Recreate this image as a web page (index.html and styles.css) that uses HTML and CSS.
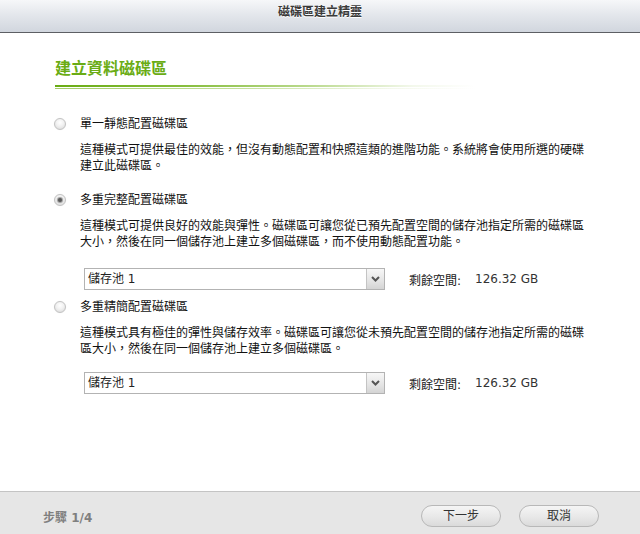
FILE: index.html
```html
<!DOCTYPE html>
<html lang="zh-Hant">
<head>
<meta charset="utf-8">
<title>磁碟區建立精靈</title>
<link rel="stylesheet" href="styles.css">
</head>
<body>
<div class="window">
  <div class="titlebar">磁碟區建立精靈</div>
  <div class="main">
    <h1 class="heading">建立資料磁碟區</h1>
    <div class="rule"><div class="rule-top"></div><div class="rule-bottom"></div></div>

    <div class="options">
      <div class="option opt1">
        <div class="option-head"><span class="radio"></span><span>單一靜態配置磁碟區</span></div>
        <p class="desc">這種模式可提供最佳的效能，但沒有動態配置和快照這類的進階功能。系統將會使用所選的硬碟建立此磁碟區。</p>
      </div>

      <div class="option opt2">
        <div class="option-head"><span class="radio checked"></span><span>多重完整配置磁碟區</span></div>
        <p class="desc">這種模式可提供良好的效能與彈性。磁碟區可讓您從已預先配置空間的儲存池指定所需的磁碟區大小，然後在同一個儲存池上建立多個磁碟區，而不使用動態配置功能。</p>
        <div class="pool-row row1">
          <div class="select"><span class="select-text">儲存池 1</span><span class="select-btn"><svg width="9" height="6" viewBox="0 0 9 6"><path d="M1 1 L4.5 4.5 L8 1" fill="none" stroke="#555" stroke-width="2"/></svg></span></div>
          <span class="free-label">剩餘空間:</span><span class="free-value">126.32 GB</span>
        </div>
      </div>

      <div class="option opt3">
        <div class="option-head"><span class="radio"></span><span>多重精簡配置磁碟區</span></div>
        <p class="desc">這種模式具有極佳的彈性與儲存效率。磁碟區可讓您從未預先配置空間的儲存池指定所需的磁碟區大小，然後在同一個儲存池上建立多個磁碟區。</p>
        <div class="pool-row row2">
          <div class="select"><span class="select-text">儲存池 1</span><span class="select-btn"><svg width="9" height="6" viewBox="0 0 9 6"><path d="M1 1 L4.5 4.5 L8 1" fill="none" stroke="#555" stroke-width="2"/></svg></span></div>
          <span class="free-label">剩餘空間:</span><span class="free-value">126.32 GB</span>
        </div>
      </div>
    </div>
  </div>
  <div class="footer">
    <span class="step">步驟 1/4</span>
    <div class="buttons">
      <button class="btn">下一步</button>
      <button class="btn">取消</button>
    </div>
  </div>
</div>
</body>
</html>
```
FILE: styles.css
```css
html, body {
  margin: 0;
  padding: 0;
  background: #fff;
}
body {
  font-family: "DejaVu Sans", "Noto Sans CJK TC", sans-serif;
  font-size: 12px;
  color: #111;
}
.window {
  width: 640px;
  height: 534px;
  display: flex;
  flex-direction: column;
  overflow: hidden;
}
.titlebar {
  height: 33px;
  box-sizing: border-box;
  padding-top: 5px;
  line-height: 14px;
  text-align: center;
  font-weight: bold;
  color: #3a3a3a;
  text-shadow: 0 1px 0 #fff;
  background: linear-gradient(to bottom, #f6f7f9 0%, #e4e7ec 45%, #d1d6de 100%);
  border-bottom: 1px solid #5d5f64;
  flex: none;
}
.main {
  flex: 1;
  padding-top: 26px;
}
.heading {
  margin: 0 0 0 55px;
  font-size: 16px;
  line-height: 20px;
  font-weight: bold;
  color: #6aac14;
}
.rule {
  margin: 6px 0 0 55px;
  width: 420px;
}
.rule-top {
  height: 2px;
  background: linear-gradient(to right, #6aac14 0%, #86bd3c 30%, #b9d98c 60%, rgba(235, 243, 222, 0.6) 85%, rgba(255,255,255,0) 100%);
}
.rule-bottom {
  height: 1px;
  margin-top: 1px;
  background: linear-gradient(to right, #a4cd6a 0%, #c4e09c 45%, rgba(235, 243, 222, 0.6) 80%, rgba(255,255,255,0) 100%);
}
.options {
  padding-left: 54px;
  margin-top: 27px;
}
.option-head {
  display: flex;
  align-items: center;
  height: 16px;
  line-height: 16px;
}
.radio {
  width: 10px;
  height: 10px;
  border-radius: 50%;
  border: 1px solid #c2c2c2;
  background: radial-gradient(circle at 50% 35%, #ffffff 0%, #f1f1f1 45%, #d6d6d6 100%);
  margin-right: 14px;
  flex: none;
  position: relative;
  box-shadow: 0 0 1px #e8e8e8;
}
.radio.checked::after {
  content: "";
  position: absolute;
  left: 3px;
  top: 3px;
  width: 4px;
  height: 4px;
  border-radius: 50%;
  background: #5a5a5a;
  box-shadow: 0 0 1px 1px #9a9a9a;
}
.desc {
  margin: 10px 0 0 26px;
  width: 510px;
  line-height: 16px;
  color: #111;
}
.opt2 {
  margin-top: 18px;
}
.opt3 {
  margin-top: 9px;
}
.pool-row {
  display: flex;
  align-items: center;
  margin-left: 30px;
}
.row1 {
  margin-top: 18px;
}
.row2 {
  margin-top: 15px;
}
.select {
  width: 301px;
  height: 22px;
  box-sizing: border-box;
  border: 1px solid #b3b3b3;
  background: #fff;
  display: flex;
  align-items: stretch;
}
.select-text {
  flex: 1;
  padding-left: 3px;
  line-height: 20px;
  color: #222;
}
.select-btn {
  width: 17px;
  border-left: 1px solid #c4c4c4;
  background: linear-gradient(to bottom, #f7f7f7 0%, #e4e4e4 60%, #d4d4d4 100%);
  display: flex;
  align-items: center;
  justify-content: center;
}
.free-label {
  margin-left: 24px;
  width: 66px;
  color: #222;
}
.free-value {
  color: #333;
}
.footer {
  flex: none;
  height: 43px;
  box-sizing: border-box;
  border-top: 1px solid #c4c4c4;
  background: #e6e6e6;
  display: flex;
  align-items: center;
  justify-content: space-between;
  padding: 6px 41px 0 43px;
}
.step {
  font-weight: bold;
  color: #7f7f7f;
}
.buttons {
  display: flex;
  gap: 18px;
}
.btn {
  width: 80px;
  height: 22px;
  border-radius: 11px;
  border: 1px solid #b8b8b8;
  background: linear-gradient(to bottom, #f5f5f5 0%, #e9e9e9 50%, #dadada 100%);
  font-family: "DejaVu Sans", "Noto Sans CJK TC", sans-serif;
  font-size: 12px;
  color: #333;
  padding: 0;
  line-height: 20px;
}
```
